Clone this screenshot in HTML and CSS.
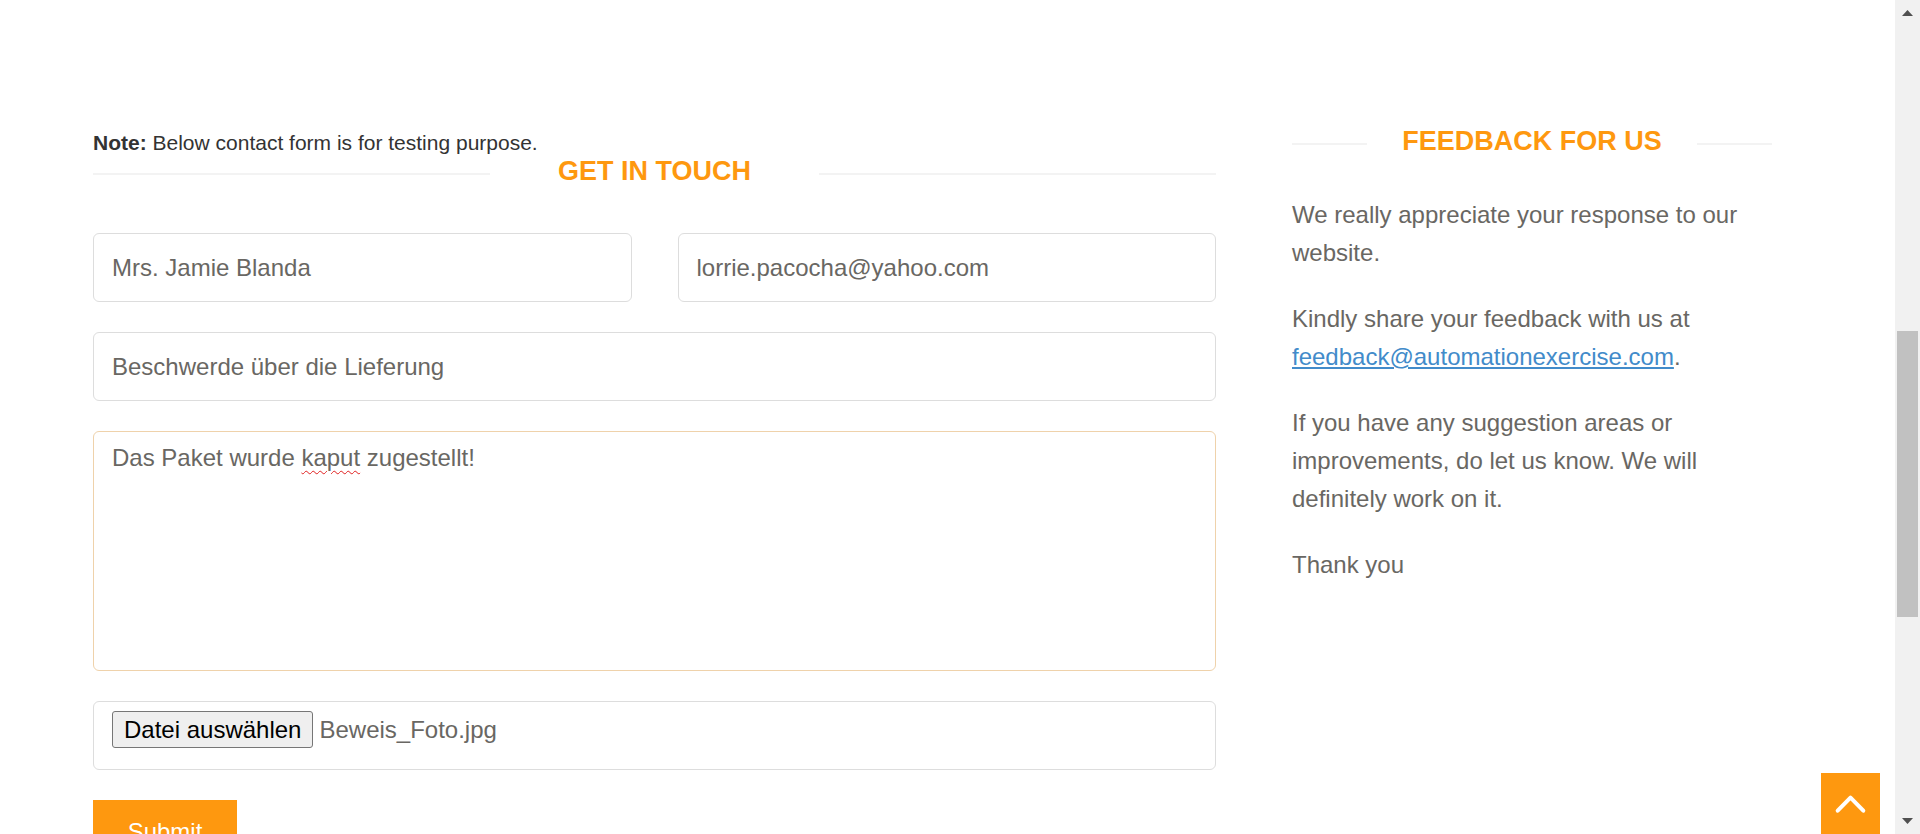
FILE: index.html
```html
<!DOCTYPE html>
<html lang="de">
<head>
<meta charset="utf-8">
<title>Contact Us</title>
<link rel="stylesheet" href="styles.css">
</head>
<body>
<div class="page">
  <div class="container">
    <div class="col-form">
      <div class="note"><b>Note:</b> Below contact form is for testing purpose.</div>
      <h2 class="title title-form"><span class="title-text">Get In Touch</span></h2>
      <form class="form">
        <div class="row2">
          <input class="field" type="text" value="Mrs. Jamie Blanda">
          <input class="field" type="text" value="lorrie.pacocha@yahoo.com">
        </div>
        <input class="field" type="text" value="Beschwerde über die Lieferung">
        <div class="field textarea">Das Paket wurde <span class="typo">kaput</span> zugestellt!</div>
        <div class="field file"><span class="file-btn">Datei auswählen</span><span class="file-name">Beweis_Foto.jpg</span></div>
        <button class="submit" type="button">Submit</button>
      </form>
    </div>
    <div class="col-info">
      <h2 class="title title-info"><span class="title-text">Feedback For Us</span></h2>
      <p class="para">We really appreciate your response to our website.</p>
      <p class="para">Kindly share your feedback with us at <a class="link" href="#">feedback@automationexercise.com</a>.</p>
      <p class="para">If you have any suggestion areas or improvements, do let us know. We will definitely work on it.</p>
      <p class="para">Thank you</p>
    </div>
  </div>
</div>
<a class="scroll-up" href="#">
  <svg class="scroll-up-icon" viewBox="0 0 59 61" width="59" height="61"><polyline points="16.7,37.7 29.5,24.6 42.3,37.7" fill="none" stroke="#fff" stroke-width="4" stroke-linecap="round" stroke-linejoin="round"/></svg>
</a>
<div class="scrollbar">
  <svg class="sb-arrow sb-up" viewBox="0 0 25 20" width="25" height="20"><polygon points="7,16 12.5,10 18,16" fill="#505050"/></svg>
  <div class="sb-thumb"></div>
  <svg class="sb-arrow sb-down" viewBox="0 0 25 20" width="25" height="20"><polygon points="7,4 18,4 12.5,10" fill="#505050"/></svg>
</div>
</body>
</html>
```
FILE: styles.css
```css
html, body {
  margin: 0;
  padding: 0;
  background: #fff;
}
body {
  overflow: hidden;
  font-family: "Liberation Sans", Arial, sans-serif;
  color: #696763;
}
.container {
  display: flex;
  gap: 76px;
  padding: 128px 0 0 93px;
}
.col-form {
  width: 1123px;
  flex: none;
}
.col-info {
  width: 480px;
  flex: none;
}
.note {
  font-size: 21px;
  line-height: 30px;
  color: #333;
}
.title {
  display: flex;
  align-items: center;
  margin: 0;
  color: #FE980F;
  font-size: 27px;
  line-height: 27px;
  font-weight: 700;
  text-transform: uppercase;
}
.title::before,
.title::after {
  content: "";
  flex: 1;
  height: 2px;
  margin-top: 5px;
  background: #f3f3f3;
}
.title-form .title-text {
  padding: 0 68px;
}
.title-info .title-text {
  padding: 0 35px;
}
.title-info {
  margin-bottom: 41px;
}
.form {
  margin-top: 48px;
  display: flex;
  flex-direction: column;
  align-items: flex-start;
}
.row2 {
  display: flex;
  gap: 46px;
  width: 100%;
}
.row2 .field {
  width: 538.5px;
}
.field {
  box-sizing: border-box;
  display: block;
  width: 100%;
  height: 69px;
  margin: 0 0 30px;
  padding: 0 18px;
  border: 1px solid #ddd;
  border-radius: 6px;
  background: #fff;
  font-family: "Liberation Sans", Arial, sans-serif;
  font-size: 24px;
  color: #696763;
  outline: none;
}
.textarea {
  height: 240px;
  padding: 9px 18px;
  line-height: 34.3px;
  border-color: #efd2ab;
}
.typo {
  text-decoration: underline wavy #e02020;
  text-decoration-thickness: 1px;
  text-underline-offset: 4px;
}
.file {
  display: flex;
  align-items: baseline;
  padding-top: 9px;
}
.file-btn {
  box-sizing: border-box;
  height: 37px;
  line-height: 35px;
  padding: 0 11px;
  margin-right: 6px;
  border: 1px solid #767676;
  border-radius: 3px;
  background: #efefef;
  color: #000;
}
.submit {
  box-sizing: border-box;
  width: 144px;
  height: 64px;
  padding: 15px 0;
  border: none;
  border-radius: 0;
  background: #FE980F;
  color: #fff;
  font-family: "Liberation Sans", Arial, sans-serif;
  font-size: 24px;
  line-height: 34px;
  text-align: center;
}
.para {
  margin: 0 0 28px;
  font-size: 24px;
  line-height: 38px;
  color: #696763;
}
.link {
  color: #428bca;
  text-decoration: underline;
}
.scroll-up {
  position: fixed;
  right: 40px;
  bottom: 0;
  width: 59px;
  height: 61px;
  background: #FE980F;
  display: block;
}
.scroll-up-icon {
  display: block;
}
.scrollbar {
  position: fixed;
  top: 0;
  right: 0;
  width: 25px;
  height: 100%;
  background: #f1f1f1;
}
.sb-arrow {
  position: absolute;
  left: 0;
  display: block;
}
.sb-up {
  top: 0;
}
.sb-down {
  bottom: 0;
}
.sb-thumb {
  position: absolute;
  top: 331px;
  left: 2px;
  width: 21px;
  height: 286px;
  background: #c1c1c1;
}
```
